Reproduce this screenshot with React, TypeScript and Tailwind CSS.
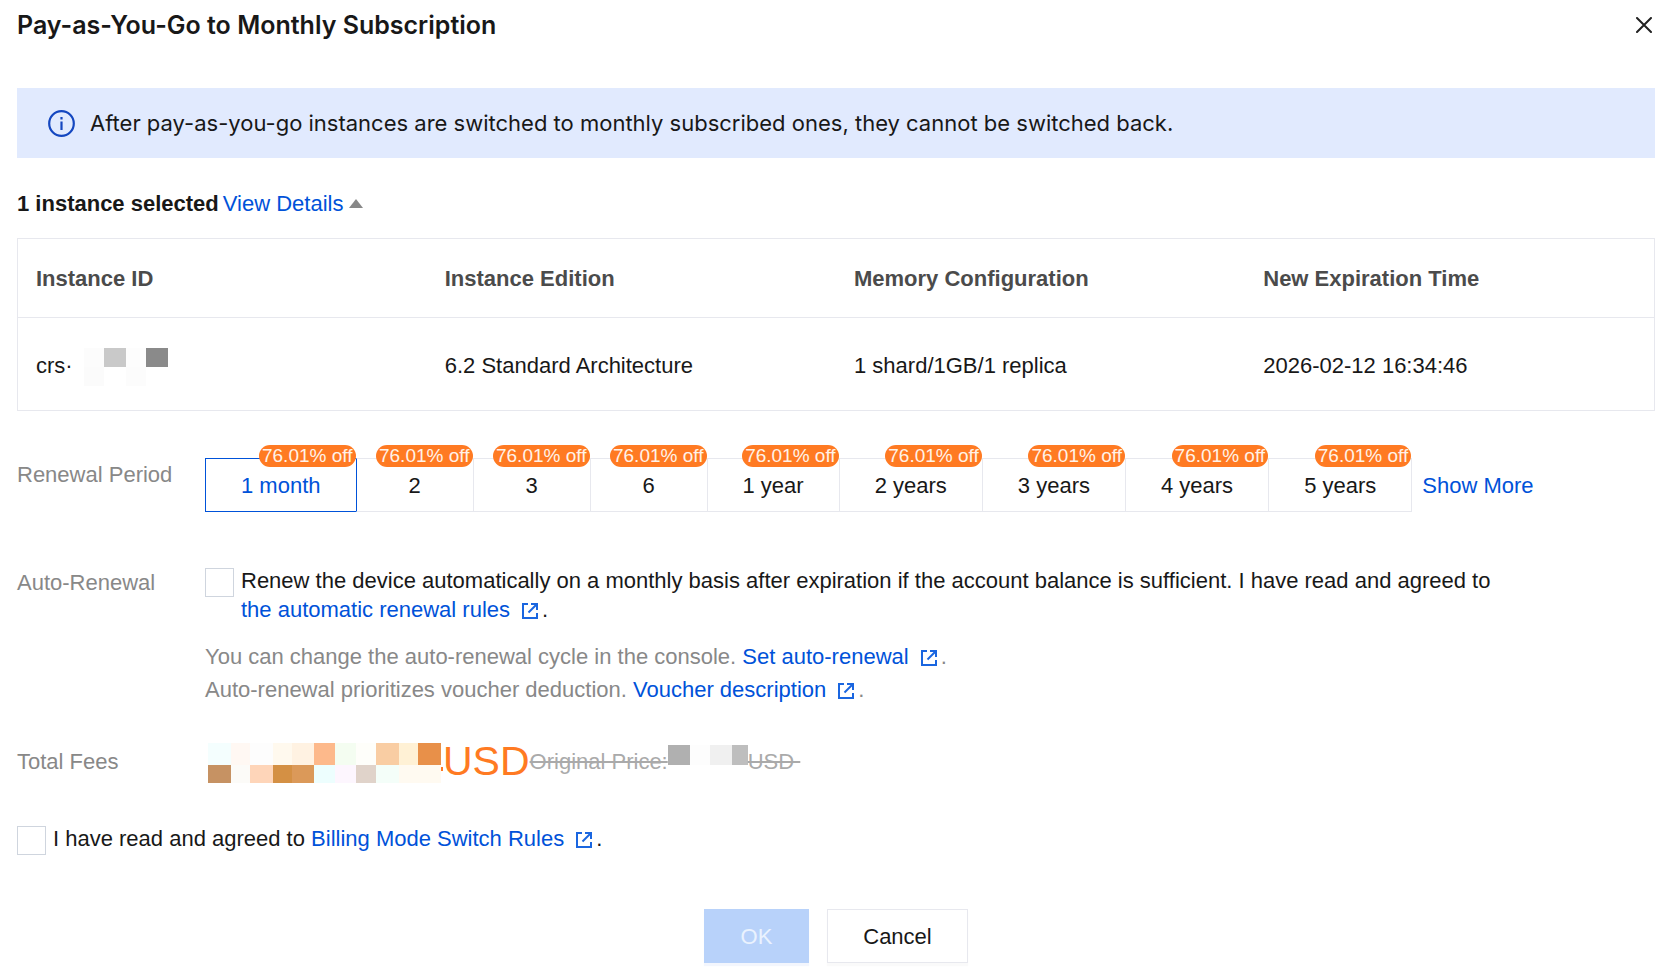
import { useState } from "react";
import type { ReactNode } from "react";

const periods = [
  "1 month",
  "2",
  "3",
  "6",
  "1 year",
  "2 years",
  "3 years",
  "4 years",
  "5 years",
];

const columns = [
  "Instance ID",
  "Instance Edition",
  "Memory Configuration",
  "New Expiration Time",
];

// [x, y, width, height, fill]
type Cell = [number, number, number, number, string];

const idCells: Cell[] = [
  [0, 0, 20, 19, "#fcfcfc"],
  [20, 0, 22, 19, "#c9c9c9"],
  [42, 0, 20, 19, "#fdfdfd"],
  [62, 0, 22, 19, "#8a8a8a"],
  [0, 19, 20, 19, "#fbfbfb"],
  [42, 19, 20, 19, "#fcfcfc"],
];

const feeCells: Cell[] = [
  [0, 0, 23, 22, "#f4fefe"],
  [23, 0, 19, 22, "#fff8f3"],
  [42, 0, 23, 22, "#fdfdfd"],
  [65, 0, 19, 22, "#fff9ee"],
  [84, 0, 22, 22, "#fff2e2"],
  [106, 0, 21, 22, "#fdb98b"],
  [127, 0, 21, 22, "#f4fdf1"],
  [148, 0, 20, 22, "#fefefa"],
  [168, 0, 23, 22, "#f9cda3"],
  [191, 0, 19, 22, "#fff1d5"],
  [210, 0, 23, 22, "#e89049"],
  [0, 22, 23, 18, "#c69263"],
  [23, 22, 19, 18, "#fcfbf8"],
  [42, 22, 23, 18, "#fed5b9"],
  [65, 22, 19, 18, "#d49044"],
  [84, 22, 22, 18, "#db9959"],
  [106, 22, 21, 18, "#edfefe"],
  [127, 22, 21, 18, "#fdf6fe"],
  [148, 22, 20, 18, "#e0d3ca"],
  [168, 22, 23, 18, "#f4fef9"],
  [191, 22, 42, 18, "#fffaf1"],
  [233, 24, 2, 4, "#ff7a22"],
];

const priceCells: Cell[] = [
  [0, 0, 22, 20, "#b0b0b0"],
  [22, 0, 20, 20, "#fdfdfd"],
  [42, 0, 22, 20, "#f0f0f0"],
  [64, 0, 16, 20, "#bebebe"],
];

const Mosaic = ({
  cells,
  width,
  height,
  className,
}: {
  cells: Cell[];
  width: number;
  height: number;
  className?: string;
}) => (
  <svg
    width={width}
    height={height}
    className={className}
    shapeRendering="crispEdges"
    aria-hidden="true"
  >
    {cells.map(([x, y, w, h, fill]) => (
      <rect key={`${x}-${y}`} x={x} y={y} width={w} height={h} fill={fill} />
    ))}
  </svg>
);

const ExternalLink = ({ children }: { children: ReactNode }) => (
  <a href="#" className="text-[#0052d9]">
    {children}
    <svg
      width="16"
      height="16"
      viewBox="0 0 16 16"
      fill="none"
      stroke="#1a66e0"
      strokeWidth="2"
      className="ml-3 mr-1 inline-block align-[-2px]"
      aria-hidden="true"
    >
      <path d="M6 1H1v14h14v-5" />
      <path d="M6.5 9.5L14 2" />
      <path d="M9 0h7v7h-2V3.4L12.6 2H9z" fill="#1a66e0" stroke="none" />
    </svg>
  </a>
);

const App = () => {
  const [period, setPeriod] = useState("1 month");

  return (
    <div className="bg-white px-[17px] pb-4 font-['Liberation_Sans',Arial,sans-serif] text-[22px] leading-[29px] text-[#181818]">
      <header className="flex h-[50px] items-center justify-between">
        <h1 className="font-['Inter',sans-serif] text-[25px] font-semibold">
          Pay-as-You-Go to Monthly Subscription
        </h1>
        <button type="button" aria-label="Close" className="p-[3px]">
          <svg
            width="16"
            height="16"
            viewBox="0 0 16 16"
            stroke="#222"
            strokeWidth="2"
            strokeLinecap="round"
          >
            <path d="M1 1l14 14M15 1L1 15" />
          </svg>
        </button>
      </header>

      <div className="mt-[38px] flex h-[70px] items-center gap-[15px] bg-[#e1eafe] px-[31px] font-['Inter',sans-serif]">
        <svg width="27" height="27" viewBox="0 0 27 27" fill="none" aria-hidden="true">
          <circle cx="13.5" cy="13.5" r="12.3" stroke="#1447c0" strokeWidth="2.2" />
          <path d="M13.5 11.5v8.5M13.5 7v2.4" stroke="#1447c0" strokeWidth="2.2" />
        </svg>
        <p>
          After pay-as-you-go instances are switched to monthly subscribed ones,
          they cannot be switched back.
        </p>
      </div>

      <div className="mt-[31px] flex items-center">
        <strong>1 instance selected</strong>
        <button type="button" className="ml-1 flex items-center gap-[6px] text-[#0052d9]">
          View Details
          <svg width="14" height="9" viewBox="0 0 14 9" aria-hidden="true">
            <path d="M7 0l7 9H0z" fill="#888" />
          </svg>
        </button>
      </div>

      <table className="mt-5 w-full table-fixed border-collapse border border-[#e7e8ee] text-left">
        <thead>
          <tr className="h-[79px] border-b border-[#e7e8ee] text-[#4b4b4b]">
            {columns.map((column) => (
              <th key={column} className="px-[18px] font-bold">
                {column}
              </th>
            ))}
          </tr>
        </thead>
        <tbody>
          <tr className="h-[93px]">
            <td className="px-[18px] pt-[2px]">
              <span className="flex items-center">
                crs·
                <Mosaic cells={idCells} width={84} height={38} className="mt-1 ml-[11px]" />
              </span>
            </td>
            <td className="px-[18px] pt-[2px]">6.2 Standard Architecture</td>
            <td className="px-[18px] pt-[2px]">1 shard/1GB/1 replica</td>
            <td className="px-[18px] pt-[2px]">2026-02-12 16:34:46</td>
          </tr>
        </tbody>
      </table>

      <div className="mt-[47px] flex">
        <div className="w-[188px] shrink-0 pt-[2px] text-[#888]">Renewal Period</div>
        <div className="flex items-center">
          {periods.map((item) => (
            <button
              key={item}
              type="button"
              aria-pressed={item === period}
              onClick={() => setPeriod(item)}
              className={
                item === period
                  ? "relative h-[54px] min-w-[118px] border border-[#0052d9] px-[35px] text-[#0052d9] not-first:-ml-px"
                  : "relative h-[54px] min-w-[118px] border border-[#e7e8ee] px-[35px] not-first:-ml-px not-first:border-l-transparent"
              }
            >
              {item}
              <span className="absolute -top-[14px] right-0 h-[22px] rounded-full bg-[#ff7a22] px-[3px] text-[19px] leading-[22px] whitespace-nowrap text-[#fff2e8]">
                76.01% off
              </span>
            </button>
          ))}
          <a href="#" className="ml-[10px] text-[#0052d9]">
            Show More
          </a>
        </div>
      </div>

      <div className="mt-[54px] flex">
        <div className="w-[188px] shrink-0 pt-[2px] text-[#888]">Auto-Renewal</div>
        <div>
          <div className="flex items-start gap-[7px]">
            <input
              id="auto-renewal"
              type="checkbox"
              className="mt-[2px] size-[29px] shrink-0 appearance-none border border-[#cfd5de] bg-white checked:bg-[#0052d9]"
            />
            <label htmlFor="auto-renewal">
              Renew the device automatically on a monthly basis after expiration
              if the account balance is sufficient. I have read and agreed to
              <br />
              <ExternalLink>the automatic renewal rules</ExternalLink>.
            </label>
          </div>
          <div className="mt-4 leading-[33px] text-[#888]">
            <p>
              You can change the auto-renewal cycle in the console.{" "}
              <ExternalLink>Set auto-renewal</ExternalLink>.
            </p>
            <p>
              Auto-renewal prioritizes voucher deduction.{" "}
              <ExternalLink>Voucher description</ExternalLink>.
            </p>
          </div>
        </div>
      </div>

      <div className="mt-[30px] flex h-[50px] items-center">
        <div className="w-[191px] shrink-0 text-[#888]">Total Fees</div>
        <Mosaic cells={feeCells} width={235} height={40} className="mt-1" />
        <span className="text-[41px] text-[#ff7a22]">USD</span>
        <s className="flex items-center whitespace-pre text-[#aaa]">
          Original Price:
          <Mosaic cells={priceCells} width={80} height={32} />
          {"USD\u00a0"}
        </s>
      </div>

      <div className="mt-[38px] flex items-start gap-[7px]">
        <input
          id="billing-rules"
          type="checkbox"
          className="mt-[2px] size-[29px] shrink-0 appearance-none border border-[#cfd5de] bg-white checked:bg-[#0052d9]"
        />
        <label htmlFor="billing-rules">
          I have read and agreed to{" "}
          <ExternalLink>Billing Mode Switch Rules</ExternalLink>.
        </label>
      </div>

      <footer className="mt-[54px] flex justify-center gap-[18px]">
        <button
          type="button"
          disabled
          className="h-[54px] w-[105px] bg-[#b8d2fa] text-[#eaf2fe] shadow-[0_3px_1px_#f3f6fd]"
        >
          OK
        </button>
        <button
          type="button"
          className="h-[54px] w-[141px] border border-[#e7e8ee] bg-white shadow-[0_3px_1px_#fafafa]"
        >
          Cancel
        </button>
      </footer>
    </div>
  );
};

export default App;
